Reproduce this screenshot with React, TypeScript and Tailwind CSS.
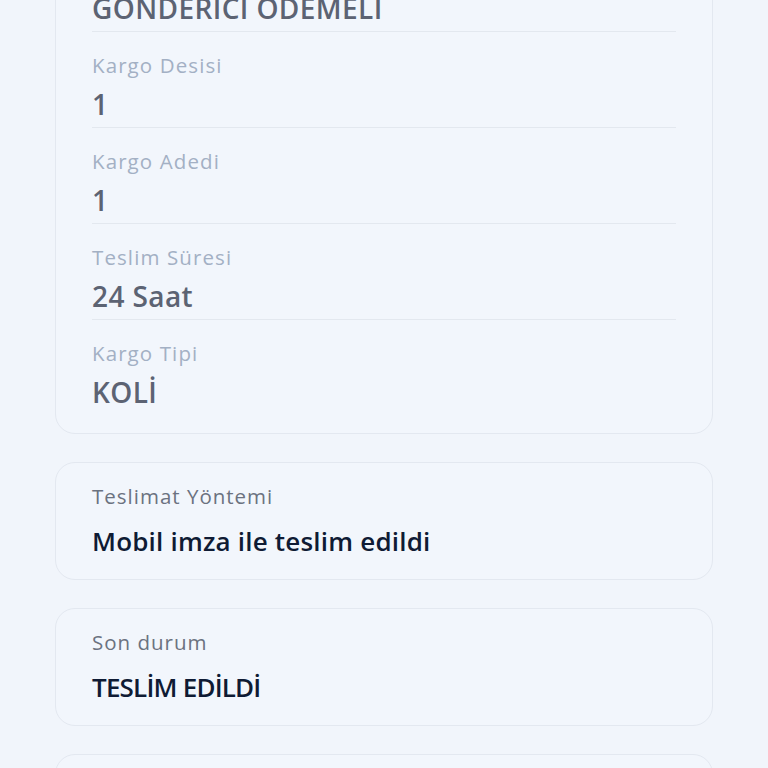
import React from "react";

interface Row {
  label: string;
  value: string;
}

const cargoRows: Row[] = [
  { label: "Ödeme Tipi", value: "GÖNDERİCİ ÖDEMELİ" },
  { label: "Kargo Desisi", value: "1" },
  { label: "Kargo Adedi", value: "1" },
  { label: "Teslim Süresi", value: "24 Saat" },
  { label: "Kargo Tipi", value: "KOLİ" },
];

const InfoCard: React.FC<Row & { valueClass?: string }> = ({
  label,
  value,
  valueClass = "tracking-[0.2px]",
}) => (
  <div className="rounded-[20px] border border-[#e3e8f0] bg-[#f2f6fc] px-[36px] pt-[19px] pb-[22px]">
    <p className="text-[20.5px] leading-[28px] tracking-[1px] text-[#6b7280]">
      {label}
    </p>
    <p
      className={`mt-[15px] text-[26px] leading-[32px] font-semibold text-[#0f1b34] ${valueClass}`}
    >
      {value}
    </p>
  </div>
);

export default function App() {
  return (
    <div
      className="min-h-screen bg-[#f1f5fb] px-[55px] overflow-hidden"
      style={{ fontFamily: '"Open Sans", "Noto Sans", sans-serif' }}
    >
      <div className="-mt-[65px] flex flex-col gap-[28px] pb-10">
        {/* Kargo details */}
        <div className="rounded-[20px] border border-[#e3e8f0] bg-[#f2f6fc] px-[36px] pb-[18px]">
          {cargoRows.map((row, i) => (
            <div
              key={row.label}
              className={`pt-[18px] pb-[3px] ${
                i < cargoRows.length - 1 ? "border-b border-[#e3e8ef]" : ""
              }`}
            >
              <p className="text-[20.5px] leading-[30px] tracking-[1.1px] text-[#a3b0c4]">
                {row.label}
              </p>
              <p className="mt-1 text-[28px] leading-[40px] font-semibold tracking-[0.4px] text-[#5c6373]">
                {row.value}
              </p>
            </div>
          ))}
        </div>

        <InfoCard label="Teslimat Yöntemi" value="Mobil imza ile teslim edildi" />
        <InfoCard
          label="Son durum"
          value="TESLİM EDİLDİ"
          valueClass="tracking-[-0.8px]"
        />
        <InfoCard label="Gönderi Takip" value="" />
      </div>
    </div>
  );
}
